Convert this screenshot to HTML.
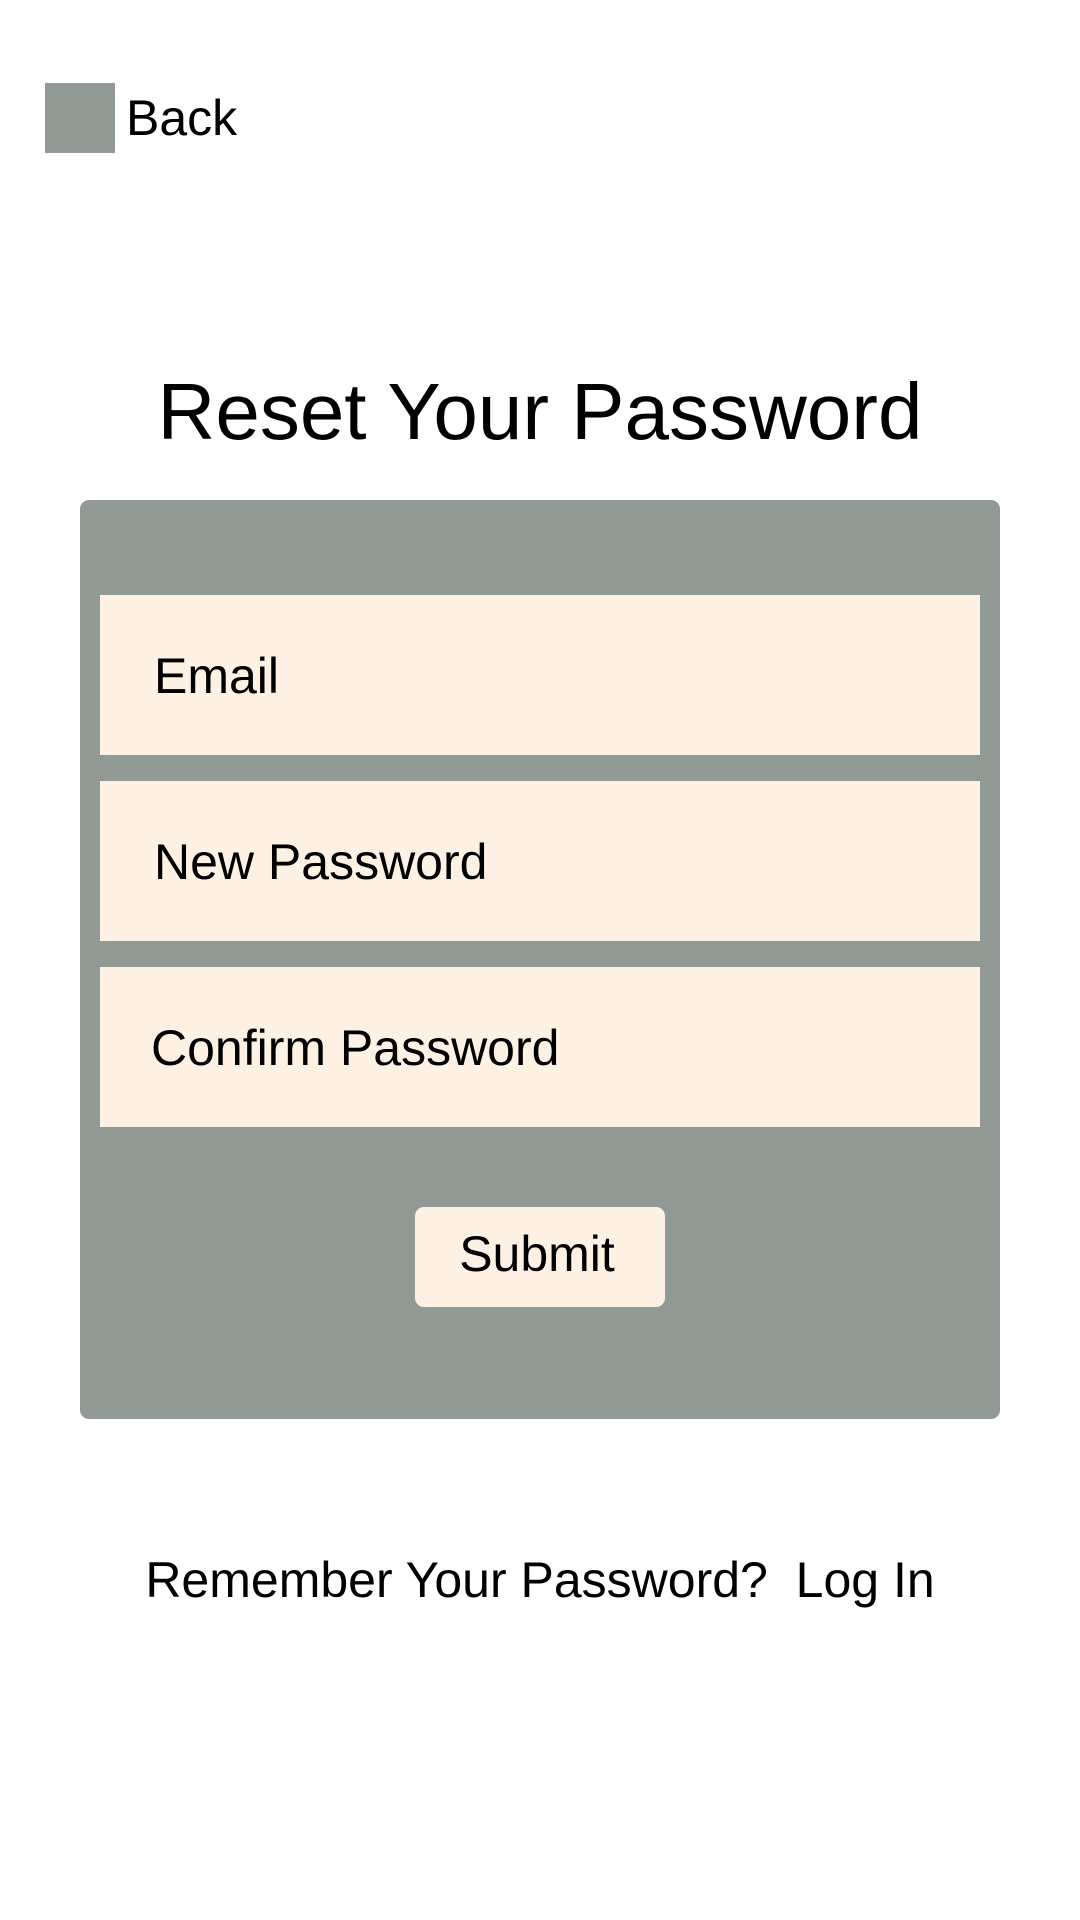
<!DOCTYPE html>
<html><head><meta charset="utf-8"><style>
html,body{margin:0;padding:0;background:#fff;width:1080px;height:1920px;overflow:hidden;font-family:"Liberation Sans",Arial,sans-serif;color:#000}
.a{position:absolute;line-height:1;white-space:nowrap}
.box{position:absolute;background:#fdf1e3}
</style></head><body>
<div style="position:absolute;left:45px;top:83px;width:70px;height:70px;background:#919a95"></div>
<div class="a" style="left:126px;top:93px;font-size:50px">Back</div>
<div class="a" style="left:0;width:1080px;text-align:center;top:372px;font-size:80px">Reset Your Password</div>
<div style="position:absolute;left:80px;top:500px;width:920px;height:919px;background:#919a95;border-radius:9px"></div>
<div class="box" style="left:100px;top:595px;width:880px;height:160px"></div>
<div class="box" style="left:100px;top:781px;width:880px;height:160px"></div>
<div class="box" style="left:100px;top:967px;width:880px;height:160px"></div>
<div class="a" style="left:154px;top:651px;font-size:50px">Email</div>
<div class="a" style="left:154px;top:837px;font-size:50px">New Password</div>
<div class="a" style="left:151px;top:1023px;font-size:50px">Confirm Password</div>
<div class="box" style="left:415px;top:1207px;width:250px;height:100px;border-radius:9px"></div>
<div class="a" style="left:412px;width:250px;text-align:center;top:1229px;font-size:50px">Submit</div>
<div class="a" style="left:0;width:1080px;text-align:center;top:1555px;font-size:50px">Remember Your Password?&nbsp; Log In</div>
</body></html>
